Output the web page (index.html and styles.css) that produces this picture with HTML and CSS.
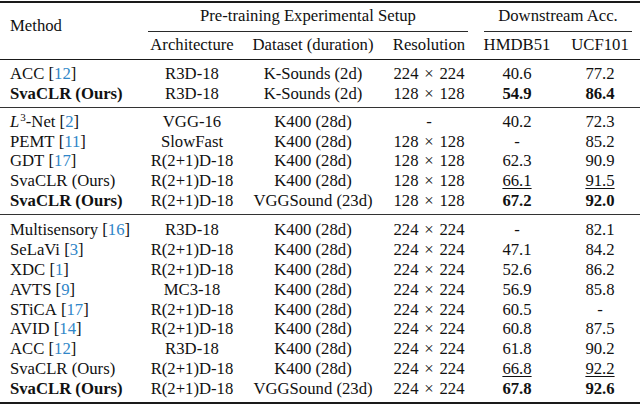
FILE: index.html
```html
<!DOCTYPE html>
<html lang="en">
<head>
<meta charset="utf-8">
<title>Results table</title>
<link rel="stylesheet" href="styles.css">
</head>
<body>
<table class="results">
  <colgroup>
    <col class="c-method">
    <col class="c-arch">
    <col class="c-data">
    <col class="c-res">
    <col class="c-hmdb">
    <col class="c-ucf">
  </colgroup>
  <thead>
    <tr class="h1">
      <th rowspan="2" class="method-h">Method</th>
      <th colspan="3"><div class="cmid cmid-pre">Pre-training Experimental Setup</div></th>
      <th colspan="2"><div class="cmid cmid-down">Downstream Acc.</div></th>
    </tr>
    <tr class="h2">
      <th>Architecture</th>
      <th>Dataset (duration)</th>
      <th>Resolution</th>
      <th>HMDB51</th>
      <th>UCF101</th>
    </tr>
  </thead>
  <tbody>
    <tr class="first">
      <td class="m">ACC&nbsp;[<span class="cite">12</span>]</td>
      <td>R3D-18</td><td>K-Sounds (2d)</td><td>224 <span class="x">×</span> 224</td><td>40.6</td><td>77.2</td>
    </tr>
    <tr class="last">
      <td class="m b">SvaCLR (Ours)</td>
      <td>R3D-18</td><td>K-Sounds (2d)</td><td>128 <span class="x">×</span> 128</td><td class="b">54.9</td><td class="b">86.4</td>
    </tr>
  </tbody>
  <tbody>
    <tr class="first sep">
      <td class="m"><i>L</i><sup>3</sup>-Net&nbsp;[<span class="cite">2</span>]</td>
      <td>VGG-16</td><td>K400 (28d)</td><td>-</td><td>40.2</td><td>72.3</td>
    </tr>
    <tr>
      <td class="m">PEMT&nbsp;[<span class="cite">11</span>]</td>
      <td>SlowFast</td><td>K400 (28d)</td><td>128 <span class="x">×</span> 128</td><td>-</td><td>85.2</td>
    </tr>
    <tr>
      <td class="m">GDT&nbsp;[<span class="cite">17</span>]</td>
      <td>R(2+1)D-18</td><td>K400 (28d)</td><td>128 <span class="x">×</span> 128</td><td>62.3</td><td>90.9</td>
    </tr>
    <tr>
      <td class="m">SvaCLR (Ours)</td>
      <td>R(2+1)D-18</td><td>K400 (28d)</td><td>128 <span class="x">×</span> 128</td><td><span class="u">66.1</span></td><td><span class="u">91.5</span></td>
    </tr>
    <tr class="last">
      <td class="m b">SvaCLR (Ours)</td>
      <td>R(2+1)D-18</td><td>VGGSound (23d)</td><td>128 <span class="x">×</span> 128</td><td class="b">67.2</td><td class="b">92.0</td>
    </tr>
  </tbody>
  <tbody>
    <tr class="first sep sep2">
      <td class="m">Multisensory&nbsp;[<span class="cite">16</span>]</td>
      <td>R3D-18</td><td>K400 (28d)</td><td>224 <span class="x">×</span> 224</td><td>-</td><td>82.1</td>
    </tr>
    <tr>
      <td class="m">SeLaVi&nbsp;[<span class="cite">3</span>]</td>
      <td>R(2+1)D-18</td><td>K400 (28d)</td><td>224 <span class="x">×</span> 224</td><td>47.1</td><td>84.2</td>
    </tr>
    <tr>
      <td class="m">XDC&nbsp;[<span class="cite">1</span>]</td>
      <td>R(2+1)D-18</td><td>K400 (28d)</td><td>224 <span class="x">×</span> 224</td><td>52.6</td><td>86.2</td>
    </tr>
    <tr>
      <td class="m">AVTS&nbsp;[<span class="cite">9</span>]</td>
      <td>MC3-18</td><td>K400 (28d)</td><td>224 <span class="x">×</span> 224</td><td>56.9</td><td>85.8</td>
    </tr>
    <tr>
      <td class="m">STiCA&nbsp;[<span class="cite">17</span>]</td>
      <td>R(2+1)D-18</td><td>K400 (28d)</td><td>224 <span class="x">×</span> 224</td><td>60.5</td><td>-</td>
    </tr>
    <tr>
      <td class="m">AVID&nbsp;[<span class="cite">14</span>]</td>
      <td>R(2+1)D-18</td><td>K400 (28d)</td><td>224 <span class="x">×</span> 224</td><td>60.8</td><td>87.5</td>
    </tr>
    <tr>
      <td class="m">ACC&nbsp;[<span class="cite">12</span>]</td>
      <td>R3D-18</td><td>K400 (28d)</td><td>224 <span class="x">×</span> 224</td><td>61.8</td><td>90.2</td>
    </tr>
    <tr>
      <td class="m">SvaCLR (Ours)</td>
      <td>R(2+1)D-18</td><td>K400 (28d)</td><td>224 <span class="x">×</span> 224</td><td><span class="u">66.8</span></td><td><span class="u">92.2</span></td>
    </tr>
    <tr class="last final">
      <td class="m b">SvaCLR (Ours)</td>
      <td>R(2+1)D-18</td><td>VGGSound (23d)</td><td>224 <span class="x">×</span> 224</td><td class="b">67.8</td><td class="b">92.6</td>
    </tr>
  </tbody>
</table>
</body>
</html>
```

FILE: styles.css
```css
html, body {
  margin: 0;
  padding: 0;
  background: #ffffff;
}

body {
  font-family: "Liberation Serif", "Times New Roman", serif;
  font-size: 16.7px;
  color: #111111;
}

.results {
  margin-top: 1px;
  width: 640px;
  table-layout: fixed;
  border-collapse: separate;
  border-spacing: 0;
}

.c-method { width: 142px; }
.c-arch { width: 100px; }
.c-data { width: 142px; }
.c-res { width: 90px; }
.c-hmdb { width: 86px; }
.c-ucf { width: 80px; }

.results th,
.results td {
  font-weight: normal;
  line-height: 19.8px;
  padding: 0;
  text-align: center;
  white-space: nowrap;
}

.results .m {
  text-align: left;
  padding-left: 10px;
}

/* header */
.h1 th {
  border-top: 2px solid #1a1a1a;
  padding-top: 3px;
  vertical-align: top;
}

.method-h {
  text-align: left !important;
  padding-left: 10px !important;
  padding-top: 13px !important;
  border-bottom: 1px solid #1a1a1a;
}

.cmid {
  padding-bottom: 5px;
  border-bottom: 1px solid #2a2a2a;
}

.cmid-pre { margin: 0 6px; }
.cmid-down { margin: 0 8px 0 10px; }

.h2 th {
  padding-top: 3.7px;
  padding-bottom: 3.5px;
  border-bottom: 1px solid #1a1a1a;
}

/* body */
.first td { padding-top: 4px; }
.last td { padding-bottom: 3.5px; }

.sep td { border-top: 1px solid #333333; }
.sep2 td { padding-top: 5px; }

.final td { border-bottom: 2px solid #1a1a1a; }

.b { font-weight: bold !important; }

.cite { color: #2f86c8; }

.x { margin: 0 1.6px; }

.u {
  text-decoration: underline;
  text-decoration-thickness: 1px;
  text-underline-offset: 2px;
}

sup {
  font-size: 11px;
  line-height: 0;
  vertical-align: 6px;
  margin-left: 1px;
}
```
